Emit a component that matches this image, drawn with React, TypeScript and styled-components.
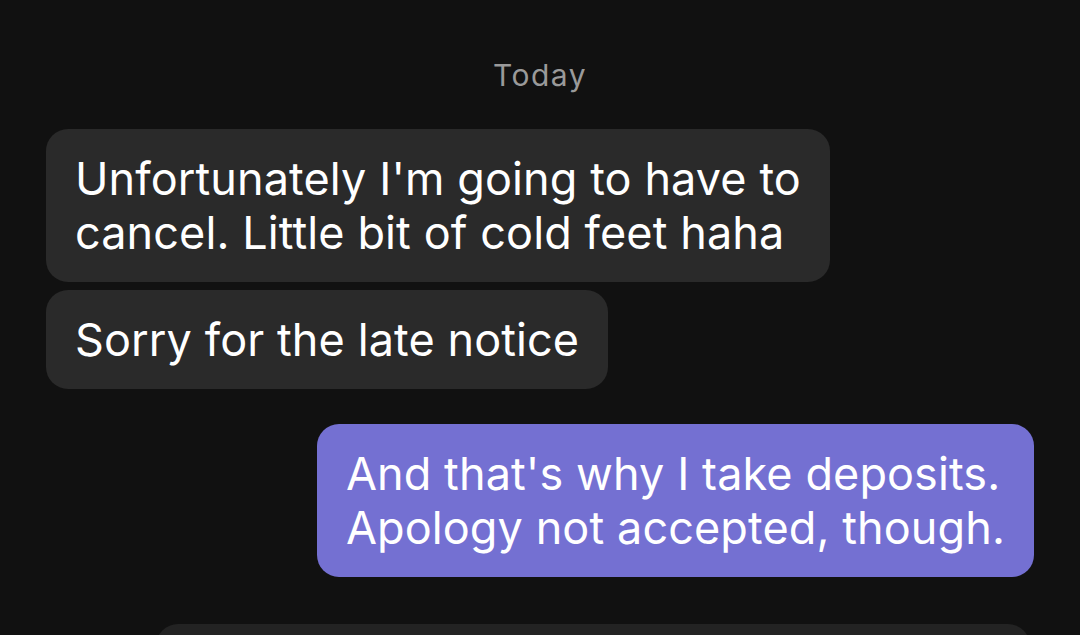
import React from 'react';
import styled, { createGlobalStyle } from 'styled-components';

const GlobalStyle = createGlobalStyle`
  html, body {
    margin: 0;
    padding: 0;
    background: #111111;
  }
  body {
    font-family: Inter, "Noto Sans", sans-serif;
    -webkit-font-smoothing: antialiased;
  }
`;

const Screen = styled.div`
  width: 1080px;
  height: 635px;
  overflow: hidden;
  background: #111111;
  box-sizing: border-box;
  padding: 58px 46px 0;
  display: flex;
  flex-direction: column;
`;

const DayLabel = styled.div`
  text-align: center;
  color: #9a9a9a;
  font-size: 30px;
  line-height: 34px;
  letter-spacing: 1.5px;
  margin-bottom: 37px;
`;

const Row = styled.div<{ $mine?: boolean; $gap: number }>`
  display: flex;
  justify-content: ${p => (p.$mine ? 'flex-end' : 'flex-start')};
  margin-top: ${p => p.$gap}px;
`;

const Bubble = styled.div<{ $mine?: boolean }>`
  padding: 22.5px 29px;
  border-radius: 22px;
  background: ${p => (p.$mine ? '#7470d2' : '#2a2a2a')};
  color: #ffffff;
  font-size: 45px;
  line-height: 54px;
  letter-spacing: 0.1px;
  white-space: nowrap;
`;

const Line = styled.div``;

const Ghost = styled.div`
  width: 874px;
  height: 120px;
  margin-right: 4px;
  border-radius: 22px;
  background: #232323;
`;

const messages = [
  { lines: ["Unfortunately I'm going to have to", 'cancel. Little bit of cold feet haha'], mine: false, gap: 0 },
  { lines: ['Sorry for the late notice'], mine: false, gap: 8 },
  { lines: ["And that's why I take deposits.", 'Apology not accepted, though.'], mine: true, gap: 35 }
];

export default function App() {
  return (
    <Screen>
      <GlobalStyle />
      <DayLabel>Today</DayLabel>
      {messages.map((m, i) => (
        <Row key={i} $mine={m.mine} $gap={m.gap}>
          <Bubble $mine={m.mine}>
            {m.lines.map(l => (
              <Line key={l}>{l}</Line>
            ))}
          </Bubble>
        </Row>
      ))}
      <Row $mine $gap={47}>
        <Ghost />
      </Row>
    </Screen>
  );
}
